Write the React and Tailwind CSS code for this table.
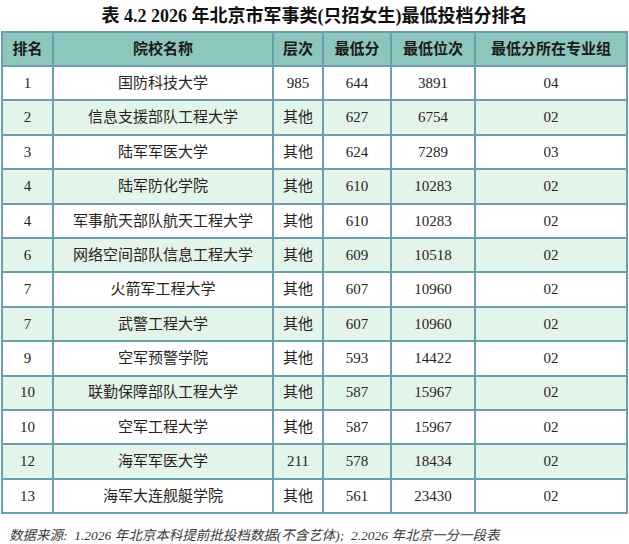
import React from "react";

const rows = [
  ["1", "国防科技大学", "985", "644", "3891", "04"],
  ["2", "信息支援部队工程大学", "其他", "627", "6754", "02"],
  ["3", "陆军军医大学", "其他", "624", "7289", "03"],
  ["4", "陆军防化学院", "其他", "610", "10283", "02"],
  ["4", "军事航天部队航天工程大学", "其他", "610", "10283", "02"],
  ["6", "网络空间部队信息工程大学", "其他", "609", "10518", "02"],
  ["7", "火箭军工程大学", "其他", "607", "10960", "02"],
  ["7", "武警工程大学", "其他", "607", "10960", "02"],
  ["9", "空军预警学院", "其他", "593", "14422", "02"],
  ["10", "联勤保障部队工程大学", "其他", "587", "15967", "02"],
  ["10", "空军工程大学", "其他", "587", "15967", "02"],
  ["12", "海军军医大学", "211", "578", "18434", "02"],
  ["13", "海军大连舰艇学院", "其他", "561", "23430", "02"],
];

const headers = ["排名", "院校名称", "层次", "最低分", "最低位次", "最低分所在专业组"];

const font = { fontFamily: '"Liberation Serif", "Noto Sans CJK SC", serif' };

export default function App() {
  return (
    <div className="w-[629px] h-[544px] bg-white relative overflow-hidden" style={font}>
      <div className="h-[31px] flex items-center justify-center text-[18px] font-bold text-[#111] pt-[1px]">
        表 4.2 2026 年北京市军事类(只招女生)最低投档分排名
      </div>
      <div className="pl-[1px] pr-[3px]">
        <table className="w-[625px] border-collapse table-fixed text-[15px] text-[#2a2420]">
          <colgroup>
            <col className="w-[51px]" />
            <col className="w-[220px]" />
            <col className="w-[50px]" />
            <col className="w-[68px]" />
            <col className="w-[84px]" />
            <col className="w-[152px]" />
          </colgroup>
          <thead>
            <tr className="h-[34px] bg-[#8cc6bd]">
              {headers.map((h) => (
                <th key={h} className="border-2 border-[#6c9fae] font-bold text-center text-[#1a1a1a] p-0">
                  {h}
                </th>
              ))}
            </tr>
          </thead>
          <tbody>
            {rows.map((r, i) => (
              <tr key={i} className={i % 2 === 1 ? "h-[34.4px] bg-[#e3f4ea]" : "h-[34.4px] bg-white"}>
                {r.map((c, j) => (
                  <td key={j} className="border-2 border-[#6c9fae] text-center p-0 whitespace-nowrap">
                    {c}
                  </td>
                ))}
              </tr>
            ))}
          </tbody>
        </table>
      </div>
      <div className="mt-[12px] pl-[9px] text-[13.5px] italic text-[#3a3a3a] whitespace-pre">
        数据来源:  1.2026 年北京本科提前批投档数据(不含艺体);  2.2026 年北京一分一段表
      </div>
    </div>
  );
}
